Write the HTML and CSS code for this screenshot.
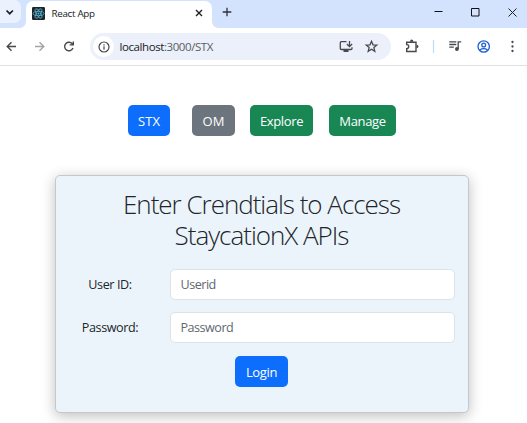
FILE: index.html
```html
<!DOCTYPE html>
<html lang="en">
<head>
<meta charset="utf-8">
<title>React App</title>
<link rel="stylesheet" href="styles.css">
</head>
<body>
<header class="tabstrip">
  <div class="tab-search"><svg width="20" height="28" viewBox="0 0 20 28" fill="none" stroke="#202124" stroke-width="1.7"><path d="M6.500 10.500l3.200 3.200 3.200-3.200"/></svg></div>
  <div class="tab">
    <svg class="favicon" width="13" height="13" viewBox="0 0 13 13"><rect width="13" height="13" rx="1.2" fill="#20232a"/><g fill="none" stroke="#55b9d5" stroke-width=".8"><ellipse cx="6.5" cy="6.5" rx="5.4" ry="2.1"/><ellipse cx="6.5" cy="6.5" rx="5.4" ry="2.1" transform="rotate(60 6.5 6.5)"/><ellipse cx="6.5" cy="6.5" rx="5.4" ry="2.1" transform="rotate(120 6.5 6.5)"/></g><circle cx="6.5" cy="6.5" r="1" fill="#55b9d5"/></svg>
    <span class="tab-title">React App</span>
    <svg class="tab-close" width="8" height="8" viewBox="0 0 8 8" stroke="#202124" stroke-width="1.4"><path d="M1 1l6 6M7 1L1 7"/></svg>
  </div>
  <svg class="new-tab" width="10" height="10" viewBox="0 0 10 10" stroke="#303338" stroke-width="1.3"><path d="M5 .7v8.6M.7 5h8.6"/></svg>
  <div class="window-controls">
    <svg width="9" height="9" viewBox="0 0 9 9" stroke="#111" fill="none"><path d="M.5 3.500h8"/></svg>
    <svg width="9" height="9" viewBox="0 0 9 9" stroke="#111" fill="none"><path d="M.5.5h7.500v7.500H.5z"/></svg>
    <svg width="9" height="9" viewBox="0 0 9 9" stroke="#222" fill="none"><path d="M.5.5l8 8M8.500.5l-8 8"/></svg>
  </div>
</header>
<nav class="toolbar">
  <svg class="nav-icons" width="90" height="37" viewBox="0 28 90 37" fill="none" stroke-width="1.4">
    <path stroke="#46494d" d="M16 46.500H7.300M11.500 42.200L7.200 46.500l4.300 4.300"/>
    <path stroke="#a2a4a7" d="M35 46.500h8.700M39.500 42.200l4.300 4.300-4.300 4.300"/>
    <path stroke="#46494d" d="M72.600 44.200A4.300 4.300 0 1 0 73 48M73.300 41.400v3.500h-3.600"/>
  </svg>
  <div class="omnibox">
    <span class="site-info"><svg width="12" height="12" viewBox="0 0 12 12" fill="none" stroke="#46494d" stroke-width="1.2"><circle cx="6" cy="6" r="5"/><path d="M6 5.200v3.500M6 3.200v1.200"/></svg></span>
    <span class="url">localhost<span class="path">:3000/STX</span></span>
    <svg class="omni-icons" width="52" height="27" viewBox="339 33 52 27" fill="none" stroke="#46494d" stroke-width="1.3">
      <path d="M346.500 41.700h-5.200q-1 0-1 1v5.800q0 1 1 1h9.700q1 0 1-1v-1.300M349.500 41v5.200M346.900 44l2.600 2.600 2.600-2.600"/><path stroke-width="2" d="M343.500 51h5"/>
      <path d="M371.500 41.300l1.500 3.500 3.800.3-2.900 2.500.9 3.700-3.300-2-3.300 2 .9-3.700-2.900-2.500 3.800-.3z"/>
    </svg>
  </div>
  <svg class="action-icons" width="136" height="37" viewBox="391 28 136 37" fill="none" stroke="#46494d" stroke-width="1.4">
    <path d="M406.700 42.200h9.300v9.300h-9.300v-2.800q2 0 2-2.100t-2-2z"/><path fill="#46494d" stroke="none" d="M410 41.700q0-2.200 1.700-2.200t1.700 2.200zM416.500 44.800q2 0 2 1.700t-2 1.700z"/>
    <path stroke="#bdd9fb" stroke-width="1.2" d="M433.500 40v13"/>
    <path stroke-width="1.300" d="M449.300 41.900h7M449.300 44.500h7M449.300 47.100h4.500M458.200 49V41.900h3"/><circle cx="456.900" cy="49" r="1.900" fill="#46494d" stroke="none"/>
    <g stroke="#1b5fd0" stroke-width="1.300"><circle cx="483.700" cy="46.500" r="5.700"/><circle cx="483.700" cy="45" r="1.900"/><path d="M479.800 50q3.900-2.600 7.800 0"/></g>
    <g fill="#46494d" stroke="none"><circle cx="512.500" cy="42" r="1.150"/><circle cx="512.500" cy="46.500" r="1.150"/><circle cx="512.500" cy="51" r="1.150"/></g>
  </svg>
</nav>
<main>
  <div class="menu">
    <button class="btn stx">STX</button>
    <button class="btn om">OM</button>
    <button class="btn explore">Explore</button>
    <button class="btn manage">Manage</button>
  </div>
  <form class="card">
    <h1>Enter Crendtials to Access StaycationX APIs</h1>
    <div class="row"><label for="uid">User ID:</label><input id="uid" type="text" placeholder="Userid"></div>
    <div class="row"><label for="pwd">Password:</label><input id="pwd" type="password" placeholder="Password"></div>
    <button class="btn login" type="button">Login</button>
  </form>
</main>
</body>
</html>
```
FILE: styles.css
```css
* { box-sizing: border-box; }
body {
  margin: 0;
  height: 423px;
  overflow: hidden;
  background: #fff;
  color: #212529;
  font-family: "Open Sans", "Noto Sans", sans-serif;
  font-size: 12.6px;
}
svg { display: block; flex: none; }

.tabstrip { display: flex; height: 28px; background: #d3e2fd; }
.tab-search { width: 21px; height: 23px; background: #ebf2fe; border-radius: 0 7px 7px 0; overflow: hidden; }
.tab {
  position: relative;
  display: flex;
  align-items: center;
  width: 186px;
  height: 27px;
  margin: 1px 0 0 5px;
  padding: 0 9px 3px 6px;
  background: #fff;
  border-radius: 7px 7px 0 0;
}
.tab::before, .tab::after { content: ""; position: absolute; bottom: 0; width: 6px; height: 6px; }
.tab::before { left: -6px; background: radial-gradient(circle at 0 0, transparent 5.5px, #fff 6px); }
.tab::after { right: -6px; background: radial-gradient(circle at 100% 0, transparent 5.5px, #fff 6px); }
.tab-title { margin-left: 6.5px; font-size: 9.8px; letter-spacing: -.3px; color: #202124; white-space: nowrap; }
.tab-close { margin-left: auto; }
.new-tab { margin: 7px 0 0 10px; }
.window-controls { display: flex; gap: 28px; margin: 8px 10px 0 auto; }

.toolbar { display: flex; height: 38px; border-bottom: 1px solid #dfe1e5; }
.omnibox { display: flex; align-items: center; width: 301px; height: 27px; margin-top: 5px; padding-left: 3px; background: #ebf0fa; border-radius: 14px; }
.site-info { display: grid; place-items: center; width: 21px; height: 21px; background: #fff; border-radius: 50%; }
.url { margin-left: 5.5px; font-size: 11.5px; letter-spacing: -.42px; color: #202124; white-space: nowrap; }
.path { color: #5a5e63; }
.omni-icons { margin-left: auto; }

.menu { display: flex; margin: 39px 0 0 128px; }
.btn {
  height: 31px;
  padding: 0;
  border: 0;
  border-radius: 5px;
  color: #fff;
  font: inherit;
  font-size: 13px;
  letter-spacing: -.35px;
}
.stx { width: 42px; background: #0d6efd; letter-spacing: 0; }
.om { width: 43px; margin-left: 22px; background: #6c757d; letter-spacing: 0; }
.explore { width: 63px; margin-left: 15px; background: #198754; }
.manage { width: 67px; margin-left: 16px; background: #198754; }

.card {
  display: flex;
  flex-direction: column;
  width: 414px;
  height: 238px;
  margin: 39px 0 0 55px;
  padding: 13px 13px 0 12px;
  background: #ecf4fb;
  border: 1px solid #c3c8cc;
  border-radius: 5px;
  box-shadow: 0 3px 14px rgba(0, 0, 0, .26);
}
h1 { height: 62px; margin: 0 0 18px; padding: 0 40px; font-size: 26px; font-weight: 300; line-height: 31px; letter-spacing: -1.02px; text-align: center; }
.row { display: flex; align-items: center; height: 31px; margin-bottom: 12px; }
label { width: 102px; padding-right: 18px; letter-spacing: -.4px; text-align: center; white-space: nowrap; flex: none; }
input {
  width: 285px;
  height: 31px;
  padding: 0 9.5px;
  border: 1px solid #dee2e6;
  border-radius: 5px;
  background: #fff;
  font: inherit;
  letter-spacing: -.5px;
}
input::placeholder { color: #62686e; opacity: 1; }
.login { width: 53px; margin: 1px 0 0 167px; background: #0d6efd; }
```
